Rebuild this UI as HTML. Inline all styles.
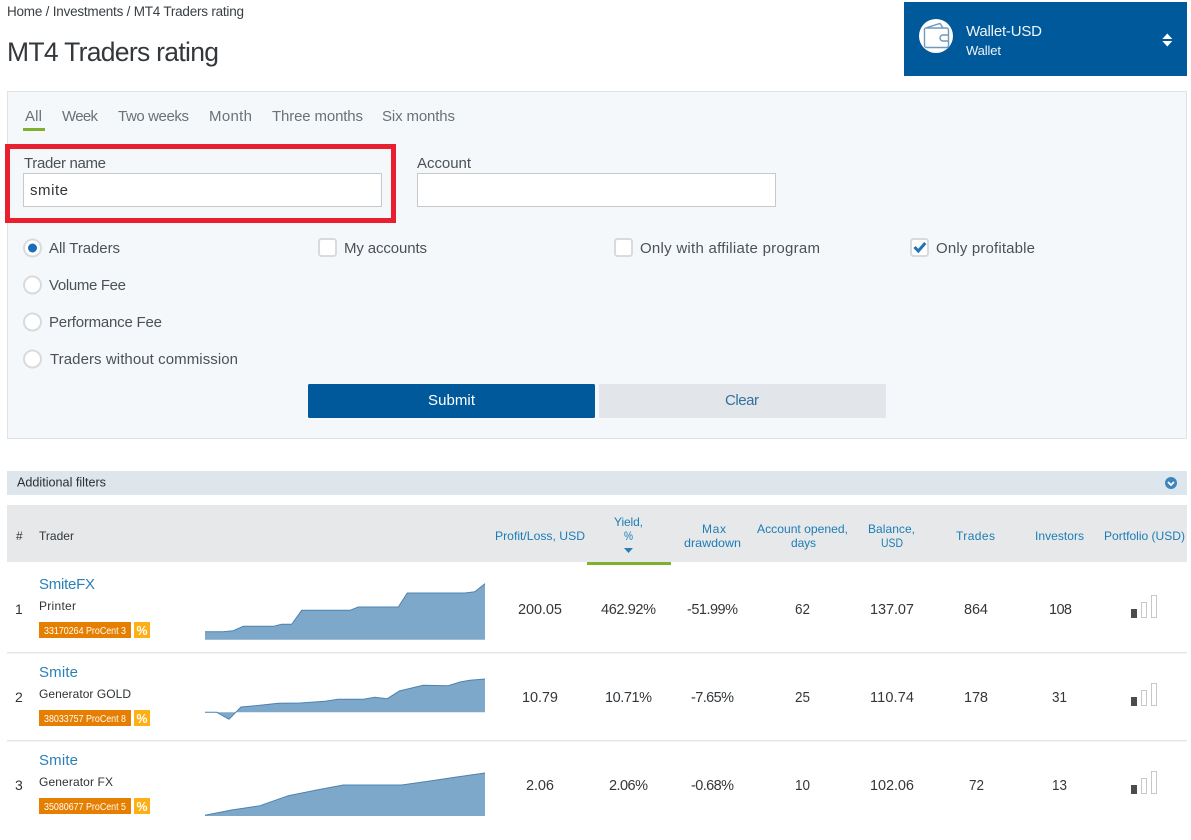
<!DOCTYPE html>
<html lang="en">
<head>
<meta charset="utf-8">
<title>MT4 Traders rating</title>
<style>
html,body{margin:0;padding:0;background:#fff;width:1191px;height:840px;overflow:hidden}
svg{display:block}
text{font-family:"Liberation Sans",sans-serif;font-size:14px;fill:#3a4045}
.tab{font-size:15px;fill:#6a7177}
.lbl{font-size:15px;fill:#4b5156}
.h{font-size:12px;fill:#1c7db5}
.v{font-size:14.5px;fill:#33373a}
.n{font-size:15px;fill:#2a80b5}
.s{font-size:12px;fill:#2f3336}
.b{font-size:10px;fill:#fff}
.p{font-size:13px;fill:#fff;font-weight:bold}
</style>
</head>
<body>
<svg width="1191" height="840" viewBox="0 0 1191 840" xmlns="http://www.w3.org/2000/svg">
<rect width="1191" height="840" fill="#fff"/>
<text x="7" y="16" style="font-size:13.5px;fill:#3b4044" textLength="237">Home / Investments / MT4 Traders rating</text>
<text x="7" y="61" style="font-size:26.5px;fill:#33383c" textLength="212">MT4 Traders rating</text>

<rect x="904" y="2" width="283" height="74" fill="#00599b"/>
<circle cx="936" cy="36" r="17" fill="#fff"/>
<path d="M924.500 29v16.500a2 2 0 0 0 2 2h20a2 2 0 0 0 2-2v-15.500a2 2 0 0 0-2-2h-20a2 2 0 0 0-2 1zM925.500 28l14.500-4.500 3 4.500M948.500 35h-5.500a3 3 0 0 0 0 6h5.500" fill="none" stroke="#6d9abd" stroke-width="1.400"/>
<text x="966" y="36" style="font-size:15px;fill:#eef4f9" textLength="76">Wallet-USD</text>
<text x="966" y="55" style="font-size:13px;fill:#eef4f9" textLength="35">Wallet</text>
<path d="M1167.300 33.500l5 5.500h-10zM1167.300 46.500l5-5.500h-10z" fill="#fff"/>

<rect x="7.500" y="91.500" width="1179" height="347" fill="#f4f8fa" stroke="#e0e3e6"/>
<text class="tab" x="25" y="121" textLength="17">All</text>
<text class="tab" x="62" y="121" textLength="36">Week</text>
<text class="tab" x="118" y="121" textLength="71">Two weeks</text>
<text class="tab" x="209" y="121" textLength="43">Month</text>
<text class="tab" x="272" y="121" textLength="91">Three months</text>
<text class="tab" x="382" y="121" textLength="73">Six months</text>
<rect x="23" y="128" width="22" height="3" fill="#7fb02f"/>

<rect x="7.500" y="146.500" width="386" height="74" fill="none" stroke="#e81f2e" stroke-width="5"/>
<text class="lbl" x="24" y="168" textLength="82">Trader name</text>
<rect x="23.500" y="173.500" width="358" height="33" fill="#fff" stroke="#c6cacd"/>
<text x="30" y="195" style="font-size:15px;fill:#30353a" textLength="38">smite</text>
<text class="lbl" x="417" y="168" textLength="54">Account</text>
<rect x="417.500" y="173.500" width="358" height="33" fill="#fff" stroke="#c6cacd"/>

<g fill="#fff" stroke="#d8dbde" stroke-width="2">
<circle cx="32.500" cy="248" r="8.500"/>
<circle cx="32.500" cy="285" r="8.500"/>
<circle cx="32.500" cy="322" r="8.500"/>
<circle cx="32.500" cy="359" r="8.500"/>
<rect x="319" y="239" width="17" height="17" rx="2.500"/>
<rect x="615" y="239" width="17" height="17" rx="2.500"/>
<rect x="911" y="239" width="17" height="17" rx="2.500"/>
</g>
<circle cx="32.500" cy="248" r="4.500" fill="#1a6fb8"/>
<path d="M914.500 247l3.800 4 7-8" fill="none" stroke="#2273b5" stroke-width="3"/>
<text class="lbl" x="49" y="253" textLength="71">All Traders</text>
<text class="lbl" x="49" y="290" textLength="77">Volume Fee</text>
<text class="lbl" x="49" y="327" textLength="113">Performance Fee</text>
<text class="lbl" x="50" y="364" textLength="188">Traders without commission</text>
<text class="lbl" x="344" y="253" textLength="83">My accounts</text>
<text class="lbl" x="640" y="253" textLength="180">Only with affiliate program</text>
<text class="lbl" x="936" y="253" textLength="99">Only profitable</text>

<rect x="308" y="384" width="287" height="34" rx="1.500" fill="#00599b"/>
<text x="428" y="405" style="font-size:15px;fill:#fff" textLength="47">Submit</text>
<rect x="599" y="384" width="287" height="34" rx="1.500" fill="#e2e5e9"/>
<text x="725" y="405" style="font-size:15px;fill:#33729f" textLength="34">Clear</text>

<rect x="7" y="471" width="1180" height="24" fill="#dce6ec"/>
<text x="17" y="486.500" style="font-size:12.500px;fill:#2a3034" textLength="89" lengthAdjust="spacingAndGlyphs">Additional filters</text>
<circle cx="1171" cy="483" r="6" fill="#3f85bb"/>
<path d="M1168 482l3 3 3-3" fill="none" stroke="#fff" stroke-width="1.800"/>

<rect x="7" y="505" width="1180" height="57" fill="#e6e8ea"/>
<rect x="587" y="562" width="84" height="3" fill="#7fb02f"/>
<text x="16" y="540" style="font-size:12px;fill:#30363a" textLength="6">#</text>
<text x="39" y="540" style="font-size:12px;fill:#30363a" textLength="35">Trader</text>
<text class="h" x="495" y="540" textLength="90" lengthAdjust="spacingAndGlyphs">Profit/Loss, USD</text>
<text class="h" x="614" y="526" textLength="29">Yield,</text>
<text class="h" x="624" y="540" textLength="9" lengthAdjust="spacingAndGlyphs">%</text>
<path d="M624 548h9l-4.500 5z" fill="#2a7fb5"/>
<text class="h" x="702" y="533" textLength="24">Max</text>
<text class="h" x="684" y="547" textLength="57" lengthAdjust="spacingAndGlyphs">drawdown</text>
<text class="h" x="757" y="533" textLength="91" lengthAdjust="spacingAndGlyphs">Account opened,</text>
<text class="h" x="791" y="547" textLength="25">days</text>
<text class="h" x="868" y="533" textLength="47">Balance,</text>
<text class="h" x="881" y="547" textLength="22" lengthAdjust="spacingAndGlyphs">USD</text>
<text class="h" x="956" y="540" textLength="39">Trades</text>
<text class="h" x="1035" y="540" textLength="49">Investors</text>
<text class="h" x="1104" y="540" textLength="81" lengthAdjust="spacingAndGlyphs">Portfolio (USD)</text>

<rect x="7" y="652" width="1180" height="1.500" fill="#e3e5e7"/>
<rect x="7" y="740" width="1180" height="1.500" fill="#e3e5e7"/>

<!-- Row 1 -->
<text x="15" y="614" style="font-size:14px;fill:#2f3336">1</text>
<text class="n" x="39" y="589" textLength="56">SmiteFX</text>
<text class="s" x="39" y="610" textLength="37">Printer</text>
<rect x="39" y="622" width="92" height="16" fill="#e67e00"/>
<text class="b" x="44" y="634" textLength="82" lengthAdjust="spacingAndGlyphs">33170264 ProCent 3</text>
<rect x="134" y="622" width="16" height="16" fill="#fdb016"/>
<text class="p" x="136.500" y="635" textLength="11" lengthAdjust="spacingAndGlyphs">%</text>
<path d="M205 639.700V631.700L223 631.700 233.300 630.700 243.300 626.300 273.300 626.300 281.700 624.300 291.700 624.300 301.700 610.300 350 610.300 358.300 607 398.300 607 407.300 593 465 593 475 591.700 485 583.700V639.700Z" fill="#7ea8ca"/>
<path d="M205 631.700L223 631.700 233.300 630.700 243.300 626.300 273.300 626.300 281.700 624.300 291.700 624.300 301.700 610.300 350 610.300 358.300 607 398.300 607 407.300 593 465 593 475 591.700 485 583.700" fill="none" stroke="#4c83b0" stroke-width="1"/>
<text class="v" x="518" y="614" textLength="44">200.05</text>
<text class="v" x="601" y="614" textLength="55">462.92%</text>
<text class="v" x="687" y="614" textLength="51">-51.99%</text>
<text class="v" x="795" y="614" textLength="15" lengthAdjust="spacingAndGlyphs">62</text>
<text class="v" x="870" y="614" textLength="44">137.07</text>
<text class="v" x="964" y="614" textLength="24">864</text>
<text class="v" x="1049" y="614" textLength="23">108</text>
<rect x="1131" y="609" width="6" height="9" fill="#4a4d50"/>
<rect x="1141.500" y="602.500" width="5" height="15" fill="none" stroke="#c6c8ca"/>
<rect x="1151.500" y="595.500" width="5" height="22" fill="none" stroke="#c6c8ca"/>

<!-- Row 2 -->
<text x="15" y="702" style="font-size:14px;fill:#2f3336">2</text>
<text class="n" x="39" y="677" textLength="39">Smite</text>
<text class="s" x="39" y="698" textLength="92">Generator GOLD</text>
<rect x="39" y="710" width="92" height="16" fill="#e67e00"/>
<text class="b" x="44" y="722" textLength="82" lengthAdjust="spacingAndGlyphs">38033757 ProCent 8</text>
<rect x="134" y="710" width="16" height="16" fill="#fdb016"/>
<text class="p" x="136.500" y="723" textLength="11" lengthAdjust="spacingAndGlyphs">%</text>
<path d="M205 712.300L216.700 712.300 229 719.300 241 707 260 705.300 278.300 703.300 300 703 325 701.300 338.300 699.300 363.300 699.300 375 697.300 387.300 698.700 399.300 691 411.700 688 423.300 685.300 448.300 685.700 460 682 470 680.300 485 679V712.300Z" fill="#7ea8ca"/>
<path d="M205 712.300L216.700 712.300 229 719.300 241 707 260 705.300 278.300 703.300 300 703 325 701.300 338.300 699.300 363.300 699.300 375 697.300 387.300 698.700 399.300 691 411.700 688 423.300 685.300 448.300 685.700 460 682 470 680.300 485 679" fill="none" stroke="#4c83b0" stroke-width="1"/>
<text class="v" x="522" y="702" textLength="36">10.79</text>
<text class="v" x="605" y="702" textLength="47">10.71%</text>
<text class="v" x="691" y="702" textLength="43">-7.65%</text>
<text class="v" x="795" y="702" textLength="15" lengthAdjust="spacingAndGlyphs">25</text>
<text class="v" x="870" y="702" textLength="44">110.74</text>
<text class="v" x="964" y="702" textLength="24">178</text>
<text class="v" x="1052" y="702" textLength="15" lengthAdjust="spacingAndGlyphs">31</text>
<rect x="1131" y="697" width="6" height="9" fill="#4a4d50"/>
<rect x="1141.500" y="690.500" width="5" height="15" fill="none" stroke="#c6c8ca"/>
<rect x="1151.500" y="683.500" width="5" height="22" fill="none" stroke="#c6c8ca"/>

<!-- Row 3 -->
<text x="15" y="790" style="font-size:14px;fill:#2f3336">3</text>
<text class="n" x="39" y="765" textLength="39">Smite</text>
<text class="s" x="39" y="786" textLength="74">Generator FX</text>
<rect x="39" y="798" width="92" height="16" fill="#e67e00"/>
<text class="b" x="44" y="810" textLength="82" lengthAdjust="spacingAndGlyphs">35080677 ProCent 5</text>
<rect x="134" y="798" width="16" height="16" fill="#fdb016"/>
<text class="p" x="136.500" y="811" textLength="11" lengthAdjust="spacingAndGlyphs">%</text>
<path d="M205 815.300L231.700 810 260 805.700 288.300 795.700 316.700 790 343.300 785 401.700 785 428.300 781.300 456.700 777 485 773V816H205Z" fill="#7ea8ca"/>
<path d="M205 815.300L231.700 810 260 805.700 288.300 795.700 316.700 790 343.300 785 401.700 785 428.300 781.300 456.700 777 485 773" fill="none" stroke="#4c83b0" stroke-width="1"/>
<text class="v" x="526" y="790" textLength="28">2.06</text>
<text class="v" x="609" y="790" textLength="39">2.06%</text>
<text class="v" x="691" y="790" textLength="43">-0.68%</text>
<text class="v" x="795" y="790" textLength="15" lengthAdjust="spacingAndGlyphs">10</text>
<text class="v" x="870" y="790" textLength="44">102.06</text>
<text class="v" x="969" y="790" textLength="15" lengthAdjust="spacingAndGlyphs">72</text>
<text class="v" x="1052" y="790" textLength="15" lengthAdjust="spacingAndGlyphs">13</text>
<rect x="1131" y="785" width="6" height="9" fill="#4a4d50"/>
<rect x="1141.500" y="778.500" width="5" height="15" fill="none" stroke="#c6c8ca"/>
<rect x="1151.500" y="771.500" width="5" height="22" fill="none" stroke="#c6c8ca"/>
</svg>
</body>
</html>
